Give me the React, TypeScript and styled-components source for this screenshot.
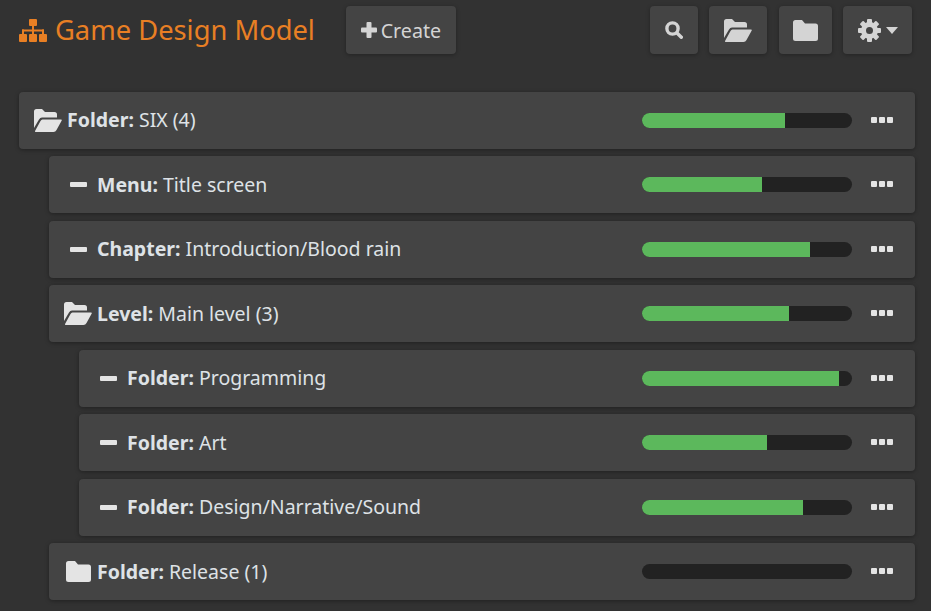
import React from "react";
import styled, { createGlobalStyle } from "styled-components";

const Global = createGlobalStyle`
  html, body { margin: 0; padding: 0; background: #323232; overflow: hidden; }
  body { font-family: "Noto Sans", sans-serif; color: #dee2e6; }
`;

const Page = styled.div`
  width: 931px;
  height: 611px;
  box-sizing: border-box;
  padding: 6px 16px 0 19px;
  overflow: hidden;
`;

const Toolbar = styled.header`
  display: flex;
  align-items: center;
  height: 48px;
  margin-right: 3px;
  margin-bottom: 37.6px;
`;

const Brand = styled.h1`
  display: flex;
  align-items: center;
  gap: 8px;
  margin: 0 31px 0 0;
  font-size: 27.3px;
  font-weight: 400;
  line-height: 48px;
  color: #e87f24;
  white-space: nowrap;
`;

const ToolButton = styled.button<{ $w: number; $ml?: number }>`
  display: flex;
  align-items: center;
  justify-content: center;
  gap: 4px;
  box-sizing: border-box;
  width: ${p => p.$w}px;
  height: 48px;
  margin-left: ${p => p.$ml ?? 0}px;
  padding: 0;
  border: 0;
  border-radius: 4px;
  background: #444444;
  box-shadow: 0 1px 4px rgba(0, 0, 0, 0.3);
  color: #d4d4d4;
  font-family: inherit;
  font-size: 19.7px;
  svg { display: block; flex: none; }
`;

const Spacer = styled.div`
  flex: 1;
`;

const Caret = styled.span`
  width: 0;
  height: 0;
  margin-left: 1px;
  border-left: 6px solid transparent;
  border-right: 6px solid transparent;
  border-top: 7px solid #d4d4d4;
`;

const Tree = styled.div`
  display: flex;
  flex-direction: column;
  gap: 7.5px;
`;

const Row = styled.div<{ $depth: number }>`
  display: flex;
  align-items: center;
  box-sizing: border-box;
  height: 57px;
  margin-left: ${p => p.$depth * 30}px;
  padding-left: 15px;
  padding-right: 22px;
  border-radius: 4px;
  background: #444444;
  box-shadow: 0 1px 4px rgba(0, 0, 0, 0.35);
`;

const IconSlot = styled.span`
  display: flex;
  align-items: center;
  justify-content: center;
  width: 28px;
  margin-right: 5px;
  color: #e4e4e4;
  flex: none;
`;

const Label = styled.div`
  flex: 1;
  font-size: 19.5px;
  line-height: 26px;
  color: #dee2e6;
  white-space: nowrap;
  b { font-weight: 700; }
`;

const Track = styled.div`
  width: 210px;
  height: 15px;
  margin-right: 19px;
  border-radius: 8px;
  background: #222222;
  overflow: hidden;
  flex: none;
`;

const Fill = styled.div`
  height: 100%;
  background: #5cb85c;
`;

const More = styled.span`
  display: flex;
  width: 22px;
  justify-content: center;
  margin-top: -1px;
  color: #e4e4e4;
  flex: none;
`;

const SitemapIcon = () => (
  <svg width="28" height="23" viewBox="0 0 28 23" fill="currentColor">
    <rect x="10" y="0" width="8" height="7" rx="1" />
    <rect x="13" y="7" width="2" height="9" />
    <rect x="3" y="10.5" width="22" height="2" />
    <rect x="3" y="10.5" width="2" height="5" />
    <rect x="23" y="10.5" width="2" height="5" />
    <rect x="0" y="15" width="8" height="8" rx="1" />
    <rect x="10" y="15" width="8" height="8" rx="1" />
    <rect x="20" y="15" width="8" height="8" rx="1" />
  </svg>
);

const FolderOpenIcon = () => (
  <svg width="28" height="23" viewBox="0 0 28 23" fill="currentColor">
    <path d="M0 2.5Q0 0 2.5 0H8L11 3H20.5Q23 3 23 5.5V8.5H8Q6 8.5 5 10.5L0 19Z" />
    <path d="M8.5 10.5H27Q28.3 10.5 27.6 11.8L22.5 21Q21.5 23 19.5 23H2Q.5 23 1.3 21.6L6.5 12Q7.2 10.5 8.5 10.5Z" />
  </svg>
);

const FolderIcon = () => (
  <svg width="25" height="21" viewBox="0 0 25 21" fill="currentColor">
    <path d="M0 2.5Q0 0 2.5 0H9L12 3.5H22.5Q25 3.5 25 6V18.5Q25 21 22.5 21H2.5Q0 21 0 18.5Z" />
  </svg>
);

const MinusIcon = () => (
  <svg width="17" height="5" viewBox="0 0 17 5" fill="currentColor">
    <rect width="17" height="5" rx="1" />
  </svg>
);

const DotsIcon = () => (
  <svg width="22" height="6" viewBox="0 0 22 6" fill="currentColor">
    <rect x="0" width="6" height="6" rx="1" />
    <rect x="8" width="6" height="6" rx="1" />
    <rect x="16" width="6" height="6" rx="1" />
  </svg>
);

const PlusIcon = () => (
  <svg width="16" height="16" viewBox="0 0 16 16" fill="currentColor">
    <rect x="5.5" width="5" height="16" rx="1" />
    <rect y="5.5" width="16" height="5" rx="1" />
  </svg>
);

const SearchIcon = () => (
  <svg width="18" height="18" viewBox="0 0 18 18" fill="none" stroke="currentColor">
    <circle cx="7.5" cy="7.5" r="5.6" strokeWidth="3.4" />
    <line x1="12" y1="12" x2="16.3" y2="16.3" strokeWidth="3.4" strokeLinecap="round" />
  </svg>
);

const GearIcon = () => (
  <svg width="23" height="23" viewBox="0 0 23 23" fill="currentColor">
    {[0, 45, 90, 135, 180, 225, 270, 315].map(a => (
      <rect key={a} x="9" y="0" width="5" height="6" rx="1" transform={`rotate(${a} 11.5 11.5)`} />
    ))}
    <path
      fillRule="evenodd"
      d="M11.5 3A8.5 8.5 0 1 1 11.5 20A8.5 8.5 0 1 1 11.5 3ZM11.5 8A3.5 3.5 0 1 0 11.5 15A3.5 3.5 0 1 0 11.5 8Z"
    />
  </svg>
);

type Item = { depth: number; icon: "open" | "closed" | "leaf"; kind: string; name: string; pct: number };

const items: Item[] = [
  { depth: 0, icon: "open", kind: "Folder:", name: "SIX (4)", pct: 68 },
  { depth: 1, icon: "leaf", kind: "Menu:", name: "Title screen", pct: 57 },
  { depth: 1, icon: "leaf", kind: "Chapter:", name: "Introduction/Blood rain", pct: 80 },
  { depth: 1, icon: "open", kind: "Level:", name: "Main level (3)", pct: 70 },
  { depth: 2, icon: "leaf", kind: "Folder:", name: "Programming", pct: 94 },
  { depth: 2, icon: "leaf", kind: "Folder:", name: "Art", pct: 59.5 },
  { depth: 2, icon: "leaf", kind: "Folder:", name: "Design/Narrative/Sound", pct: 76.6 },
  { depth: 1, icon: "closed", kind: "Folder:", name: "Release (1)", pct: 0 },
];

function RowIcon({ icon }: { icon: Item["icon"] }) {
  if (icon === "open") return <FolderOpenIcon />;
  if (icon === "closed") return <FolderIcon />;
  return <MinusIcon />;
}

export default function App() {
  return (
    <Page>
      <Global />
      <Toolbar>
        <Brand>
          <SitemapIcon />
          Game Design Model
        </Brand>
        <ToolButton $w={110}>
          <PlusIcon />
          Create
        </ToolButton>
        <Spacer />
        <ToolButton $w={48} aria-label="Search">
          <SearchIcon />
        </ToolButton>
        <ToolButton $w={58} $ml={11} aria-label="Expand all">
          <FolderOpenIcon />
        </ToolButton>
        <ToolButton $w={53} $ml={12} aria-label="Collapse all">
          <FolderIcon />
        </ToolButton>
        <ToolButton $w={69} $ml={11} aria-label="Settings">
          <GearIcon />
          <Caret />
        </ToolButton>
      </Toolbar>
      <Tree>
        {items.map(it => (
          <Row key={it.kind + it.name} $depth={it.depth}>
            <IconSlot>
              <RowIcon icon={it.icon} />
            </IconSlot>
            <Label>
              <b>{it.kind}</b> {it.name}
            </Label>
            <Track>
              <Fill style={{ width: `${it.pct}%` }} />
            </Track>
            <More>
              <DotsIcon />
            </More>
          </Row>
        ))}
      </Tree>
    </Page>
  );
}
